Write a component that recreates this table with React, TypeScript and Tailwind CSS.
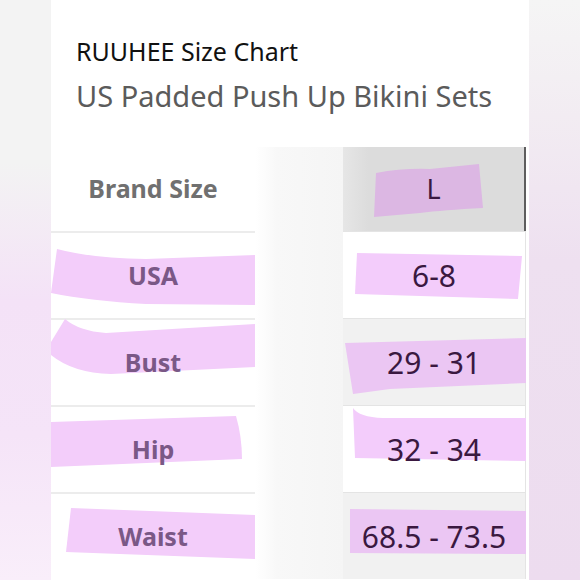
const rows = [
  {
    label: "USA",
    value: "6-8",
    left: "M6,16 Q40,25 95,26 L204,22 L204,72 L95,71 Q40,68 0,60 Z",
    right: "M14,21 L179,24 L175,67 L12,62 Z",
    gray: false,
  },
  {
    label: "Bust",
    value: "29 - 31",
    left: "M14,-1 Q28,11 55,13 L204,4 L204,47 L60,54 Q22,53 0,35 L0,22 Z",
    right: "M2,24 L183,19 L183,64 L47,70 L10,75 Z",
    gray: true,
  },
  {
    label: "Hip",
    value: "32 - 34",
    left: "M0,15 L185,9 Q191,30 191,52 L0,60 Z",
    right: "M10,2 Q16,11 40,12 L183,12 L183,55 L12,52 Z",
    gray: false,
  },
  {
    label: "Waist",
    value: "68.5 - 73.5",
    left: "M20,14 L204,21 L204,65 L15,58 Z",
    right: "M7,16 L183,18 L183,61 L7,60 Z",
    gray: true,
  },
];

function Mark({ d, fill, w, h }: { d: string; fill: string; w: number; h: number }) {
  return (
    <svg
      className="absolute inset-0 overflow-visible"
      width={w}
      height={h}
      viewBox={`0 0 ${w} ${h}`}
    >
      <path d={d} fill={fill} />
    </svg>
  );
}

export default function App() {
  return (
    <div className="flex w-[580px] h-[580px] overflow-hidden bg-white" style={{ fontFamily: '"Noto Sans", "Open Sans", sans-serif' }}>
      <div className="w-[51px] shrink-0 bg-[linear-gradient(180deg,#f3f3f3_0%,#f3f3f3_28%,#f4e2f7_52%,#f5e4f8_75%,#f9eefa_100%)]" />

      <div className="w-[478px] shrink-0 flex flex-col bg-white">
        <div className="h-[147px] shrink-0 pl-[25px] pt-[33px]">
          <div className="text-[25px] leading-[36px] text-[#111]">RUUHEE Size Chart</div>
          <div className="text-[29px] leading-[42px] mt-[6px] text-[#5b5b5b]">US Padded Push Up Bikini Sets</div>
        </div>

        {/* header row */}
        <div className="flex h-[84px] shrink-0">
          <div className="w-[204px] flex items-center justify-center">
            <span className="text-[25px] font-bold text-[#707070]">Brand Size</span>
          </div>
          <div className="w-[88px] bg-[linear-gradient(90deg,#ffffff_0%,#f8f8f8_25%,#f5f5f5_100%)]" />
          <div className="relative w-[183px] flex items-center justify-center bg-[linear-gradient(90deg,#e6e6e6_0%,#dcdcdc_14%,#dcdcdc_100%)] border-r-2 border-[#5e5e5e]">
            <Mark d="M33,26 Q60,21 87,22 L136,17 L140,61 Q100,63 77,66 L31,70 Z" fill="#dcb7e3" w={181} h={84} />
            <span className="relative text-[27px] text-[#3a1840]">L</span>
          </div>
          <div className="w-[3px]" />
        </div>

        {rows.map((r) => (
          <div key={r.label} className="flex h-[87px] shrink-0">
            <div className="relative w-[204px] flex items-center justify-center border-t-2 border-[#ececec]">
              <Mark d={r.left} fill="#f3cdfa" w={204} h={85} />
              <span className="relative text-[25px] font-bold text-[#7a5886]">{r.label}</span>
            </div>
            <div className="w-[88px] bg-[linear-gradient(90deg,#ffffff_0%,#f8f8f8_25%,#f5f5f5_100%)]" />
            <div
              className={`relative w-[183px] flex items-center justify-center border-t border-r border-[#e4e4e4] ${
                r.gray ? "bg-[#f1f1f1]" : "bg-white"
              }`}
            >
              <Mark d={r.right} fill={r.gray ? "#ebc6f3" : "#f3ccfb"} w={182} h={86} />
              <span className="relative text-[30px] text-[#3a1840]">{r.value}</span>
            </div>
            <div className="w-[3px]" />
          </div>
        ))}
      </div>

      <div className="w-[51px] shrink-0 bg-[linear-gradient(180deg,#f5f5f5_0%,#f2ecf2_20%,#eee0f0_45%,#eddcef_100%)]" />
    </div>
  );
}
